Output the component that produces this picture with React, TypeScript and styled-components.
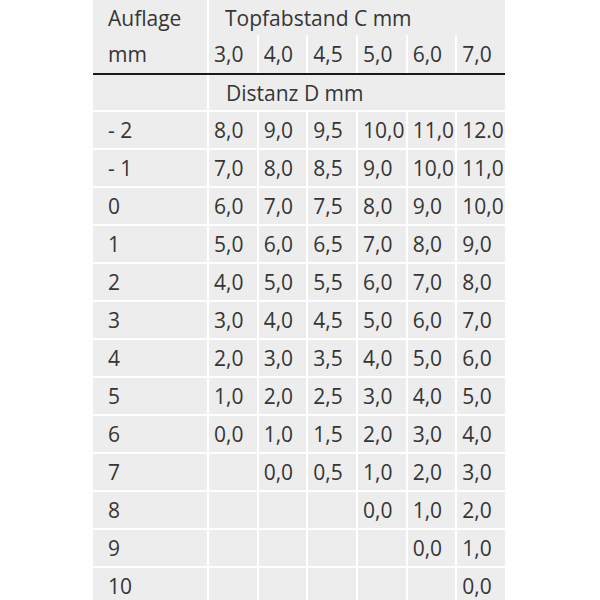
import styled, { createGlobalStyle } from "styled-components";

const GlobalStyle = createGlobalStyle`
  html, body {
    margin: 0;
    padding: 0;
    background: #ffffff;
  }
  body {
    font-family: "Open Sans", "Noto Sans", "Liberation Sans", sans-serif;
    color: #353535;
    overflow: hidden;
  }
`;

const Page = styled.div`
  padding-left: 93px;
  width: 412px;
`;

const Header = styled.div`
  display: grid;
  grid-template-columns: 114px repeat(6, 1fr);
  grid-template-rows: 35px 38px;
  column-gap: 2px;
  background: #ffffff;
  border-bottom: 2px solid #1a1a1a;
`;

const Body = styled.div`
  display: grid;
  grid-template-columns: 114px repeat(6, 1fr);
  grid-auto-rows: 36px;
  grid-template-rows: 35px;
  gap: 2px;
  background: #ffffff;
`;

const Cell = styled.div<{ $first?: boolean; $span?: boolean; $pad?: number }>`
  background: #ededed;
  display: flex;
  align-items: center;
  font-size: 21px;
  white-space: nowrap;
  padding-left: ${(p) => (p.$pad ?? (p.$first ? 15 : 5))}px;
  ${(p) => (p.$span ? "grid-column: 2 / 8;" : "")}
`;

const StackCell = styled.div`
  grid-row: 1 / 3;
  background: #ededed;
  display: grid;
  grid-template-rows: 35px 38px;
  font-size: 21px;
  padding-left: 15px;

  span {
    display: flex;
    align-items: center;
  }
`;

const columns = ["3,0", "4,0", "4,5", "5,0", "6,0", "7,0"];

const rows: [string, string[]][] = [
  ["- 2", ["8,0", "9,0", "9,5", "10,0", "11,0", "12.0"]],
  ["- 1", ["7,0", "8,0", "8,5", "9,0", "10,0", "11,0"]],
  ["0", ["6,0", "7,0", "7,5", "8,0", "9,0", "10,0"]],
  ["1", ["5,0", "6,0", "6,5", "7,0", "8,0", "9,0"]],
  ["2", ["4,0", "5,0", "5,5", "6,0", "7,0", "8,0"]],
  ["3", ["3,0", "4,0", "4,5", "5,0", "6,0", "7,0"]],
  ["4", ["2,0", "3,0", "3,5", "4,0", "5,0", "6,0"]],
  ["5", ["1,0", "2,0", "2,5", "3,0", "4,0", "5,0"]],
  ["6", ["0,0", "1,0", "1,5", "2,0", "3,0", "4,0"]],
  ["7", ["", "0,0", "0,5", "1,0", "2,0", "3,0"]],
  ["8", ["", "", "", "0,0", "1,0", "2,0"]],
  ["9", ["", "", "", "", "0,0", "1,0"]],
  ["10", ["", "", "", "", "", "0,0"]],
];

export default function App() {
  return (
    <>
      <GlobalStyle />
      <Page>
        <Header>
          <StackCell>
            <span>Auflage</span>
            <span>mm</span>
          </StackCell>
          <Cell $span $pad={16}>Topfabstand C mm</Cell>
          {columns.map((c) => (
            <Cell key={c}>{c}</Cell>
          ))}
        </Header>
        <Body>
          <Cell $first />
          <Cell $span $pad={17}>Distanz D mm</Cell>
          {rows.map(([label, values]) => (
            <>
              <Cell $first key={label}>{label}</Cell>
              {values.map((v, i) => (
                <Cell key={label + i}>{v}</Cell>
              ))}
            </>
          ))}
        </Body>
      </Page>
    </>
  );
}
